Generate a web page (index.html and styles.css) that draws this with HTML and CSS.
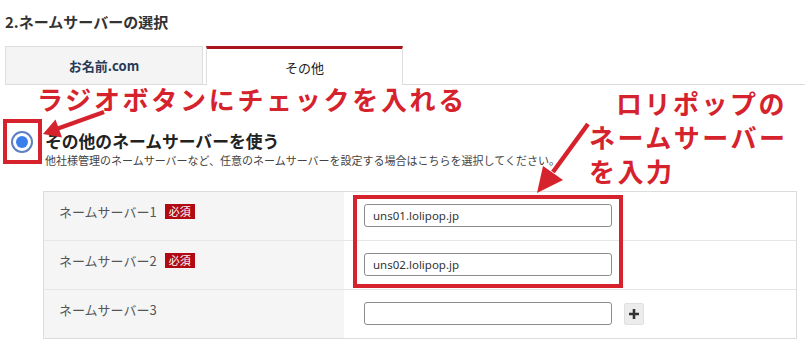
FILE: index.html
```html
<!DOCTYPE html>
<html lang="ja">
<head>
<meta charset="utf-8">
<link rel="stylesheet" href="styles.css">
</head>
<body>
<div class="page">
  <h2 class="title">2.ネームサーバーの選択</h2>
  <div class="tabs">
    <div class="tab">お名前.com</div>
    <div class="tab active">その他</div>
  </div>
  <div class="option">
    <span class="radio"><span class="dot"></span></span>
    <div class="option-body">
      <div class="option-label">その他のネームサーバーを使う</div>
      <p class="option-desc">他社様管理のネームサーバーなど、任意のネームサーバーを設定する場合はこちらを選択してください。</p>
    </div>
  </div>
  <div class="ns-table">
    <div class="row">
      <div class="label">ネームサーバー1<span class="badge">必須</span></div>
      <div class="field"><input class="input" type="text" value="uns01.lolipop.jp"></div>
    </div>
    <div class="row">
      <div class="label">ネームサーバー2<span class="badge">必須</span></div>
      <div class="field"><input class="input" type="text" value="uns02.lolipop.jp"></div>
    </div>
    <div class="row">
      <div class="label">ネームサーバー3</div>
      <div class="field"><input class="input" type="text" value=""><span class="plus"><svg width="12" height="12" viewBox="0 0 12 12"><path d="M6 1v10M1 6h10" stroke="#333" stroke-width="2.6"/></svg></span></div>
    </div>
  </div>

  <div class="note note-radio">ラジオボタンにチェックを入れる</div>
  <div class="note note-ns"><span class="l1">ロリポップの</span><span>ネームサーバー</span><span>を入力</span></div>
  <div class="mark mark-radio"></div>
  <div class="mark mark-ns"></div>
  <svg class="arrows" width="807" height="344" viewBox="0 0 807 344">
    <line x1="104" y1="112" x2="58" y2="128.5" stroke="#d6222c" stroke-width="4.5"/>
    <polygon points="43,134 55.5,119.5 62,137.5" fill="#d6222c"/>
    <line x1="588" y1="124" x2="553" y2="172" stroke="#d6222c" stroke-width="4.5"/>
    <polygon points="537,193 543,166 563,180" fill="#d6222c"/>
  </svg>
</div>
</body>
</html>
```

FILE: styles.css
```css
* { box-sizing: border-box; }
html, body { margin: 0; padding: 0; background: #fff; }
body {
  font-family: "Noto Sans CJK JP", "Noto Sans", sans-serif;
  color: #333;
  width: 807px;
  height: 344px;
  overflow: hidden;
}
.page {
  position: relative;
  padding: 12px 2px 0 5px;
  height: 344px;
}
.title {
  margin: 0;
  font-size: 15px;
  line-height: 20px;
  font-weight: bold;
  color: #333;
}
.tabs {
  display: flex;
  gap: 3px;
  margin-top: 14px;
  border-bottom: 1px solid #dcdcdc;
  height: 39px;
}
.tab {
  width: 198px;
  height: 38px;
  display: flex;
  align-items: center;
  justify-content: center;
  font-size: 13px;
  font-weight: bold;
  background: #f4f4f4;
  border: 1px solid #dedede;
  border-bottom: none;
  color: #273a58;
}
.tab.active {
  background: #fff;
  border-top: 3px solid #a8151c;
  color: #222;
  font-weight: normal;
  height: 39px;
  width: 197px;
}
.option {
  display: flex;
  gap: 12px;
  margin-top: 46px;
  margin-left: 6px;
}
.radio {
  flex: none;
  width: 22px;
  height: 22px;
  border-radius: 50%;
  border: 2px solid #5d80c2;
  display: flex;
  align-items: center;
  justify-content: center;
}
.dot {
  width: 12px;
  height: 12px;
  border-radius: 50%;
  background: #3a80ec;
}
.option-label {
  font-size: 16.8px;
  line-height: 20px;
  font-weight: bold;
  color: #222;
}
.option-desc {
  margin: 2px 0 0;
  font-size: 11px;
  line-height: 14px;
  color: #444;
}
.ns-table {
  margin: 24px 8px 0 38px;
  border: 1px solid #dcdcdc;
}
.row {
  display: grid;
  grid-template-columns: 300px 1fr;
  height: 48px;
}
.row + .row { border-top: 1px solid #e6e6e6; height: 49px; }
.label {
  background: #f5f5f5;
  padding: 12px 0 0 15px;
  font-size: 13px;
  line-height: 16px;
  color: #555;
}
.badge {
  display: inline-block;
  margin-left: 8px;
  padding: 0 4px;
  background: #b10a12;
  color: #fff;
  font-size: 11px;
  line-height: 15px;
  vertical-align: 1px;
}
.field {
  display: flex;
  align-items: flex-start;
  padding: 12px 0 0 20px;
}
.input {
  width: 248px;
  height: 23px;
  border: 1px solid #8c8c8c;
  border-radius: 3px;
  padding: 0 8px;
  font-family: "Noto Sans", sans-serif;
  font-size: 11.5px;
  color: #333;
  background: #fff;
  outline: none;
}
.plus {
  margin: 1px 0 0 12px;
  width: 20px;
  height: 22px;
  background: #ececec;
  border: 1px solid #e0e0e0;
  border-radius: 2px;
  display: flex;
  align-items: center;
  justify-content: center;
}
.note {
  position: absolute;
  color: #d6222c;
  font-weight: bold;
}
.note-radio {
  left: 37px;
  top: 86px;
  font-size: 26px;
  line-height: 26px;
  letter-spacing: 2.7px;
  white-space: nowrap;
}
.note-ns {
  left: 589px;
  top: 86px;
  font-size: 26px;
  line-height: 34px;
  letter-spacing: 2.5px;
  display: flex;
  flex-direction: column;
  white-space: nowrap;
}
.note-ns .l1 { margin-left: 27px; }
.mark {
  position: absolute;
  border: 4px solid #d6222c;
}
.mark-radio { left: 3px; top: 119px; width: 39px; height: 45px; }
.mark-ns { left: 353px; top: 195px; width: 270px; height: 93px; }
.arrows {
  position: absolute;
  left: 0;
  top: 0;
  pointer-events: none;
}
```
